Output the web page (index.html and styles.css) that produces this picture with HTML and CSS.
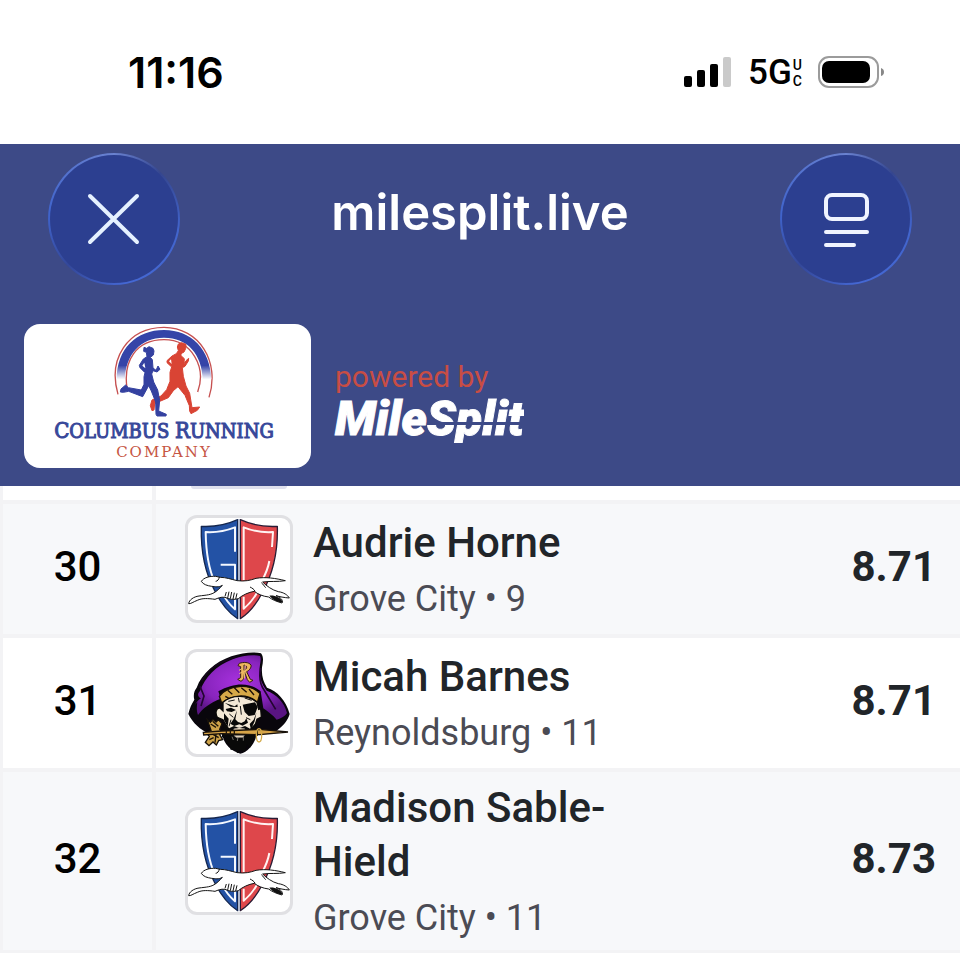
FILE: index.html
```html
<!DOCTYPE html>
<html lang="en">
<head>
<meta charset="utf-8">
<meta name="viewport" content="width=device-width, initial-scale=1">
<title>milesplit.live</title>
<link rel="stylesheet" href="styles.css">
</head>
<body>
<svg class="defs" aria-hidden="true">
  <defs>
    <symbol id="grove-city" viewBox="36 114 306 306">
      <g stroke-linejoin="round">
        <path d="M185 119C152 134 112 141 76 139C74 210 86 278 118 336C136 371 158 399 185 416Z" fill="#2352a5" stroke="#14264e" stroke-width="4"/>
        <path d="M193 119C226 134 268 141 304 139C306 210 292 278 260 336C242 371 220 399 193 416Z" fill="#de474b" stroke="#2a1c35" stroke-width="4"/>
        <path d="M189 117V418" stroke="#aeb6cc" stroke-width="5"/>
        <path d="M177 215V142C148 153 118 158 89 156C90 218 96 262 116 306M134 254H177V303M136 334C147 356 162 375 177 388V352" fill="none" stroke="#f4f8ff" stroke-width="6"/>
        <path d="M288 201L291 156C260 158 230 153 203 142V300M280 243C276 267 268 284 257 304M203 350V386C218 374 232 358 243 338" fill="none" stroke="#fff3f2" stroke-width="6"/>
        <path d="M76 304C83 293 100 288 119 289L133 292C150 292 165 298 184 302C205 305 224 301 240 295C268 290 300 295 328 302C306 306 280 303 260 306C272 318 288 330 307 335C323 337 335 345 340 354C325 353 310 350 300 347C314 352 322 360 318 369C303 365 288 359 278 351C260 349 245 342 235 334C217 337 200 345 187 356C175 360 158 358 147 352C134 350 125 355 117 358C96 355 78 354 64 361C51 366 44 372 38 371C39 360 53 350 69 348C90 345 107 346 123 332C132 324 136 320 139 316C128 323 117 320 107 319C94 317 82 314 76 304Z" fill="#fff" stroke="#151515" stroke-width="3"/>
        <path d="M119 304C124 304 129 298 130 291M222 321C228 324 235 328 237 334M256 308C264 315 262 316 269 323M151 336L147 349M159 335L155 354M167 336L163 356M175 338L171 357M183 340L179 357" fill="none" stroke="#151515" stroke-width="3"/>
        <path d="M280 347C295 345 313 351 321 367C307 368 292 361 280 347Z" fill="#111"/>
      </g>
    </symbol>
    <symbol id="reynoldsburg" viewBox="24 36 306 306">
      <radialGradient id="hat" cx=".5" cy=".42" r=".55">
        <stop offset="0" stop-color="#a832df"/>
        <stop offset=".65" stop-color="#8824bd"/>
        <stop offset="1" stop-color="#591482"/>
      </radialGradient>
      <path d="M25 222C29 205 35 191 43 179C39 165 43 151 50 143C65 102 105 66 154 49C187 38 222 34 243 40C252 51 249 66 246 82C244 108 250 125 261 143C291 153 318 180 329 222C324 241 310 258 289 273L230 279C229 306 205 336 181 341C155 335 130 313 126 280L88 281C61 270 38 249 25 222Z" fill="#09060c"/>
      <path d="M34 218C37 205 44 194 52 187C50 201 49 211 54 225C67 205 91 188 122 176L115 154C165 125 213 128 242 154L250 205C264 215 278 225 290 239C304 236 315 228 321 219C313 187 289 162 260 152C244 132 237 110 239 82C241 66 244 56 240 48C219 43 186 47 158 58C107 77 75 113 60 153C51 162 53 171 63 175C51 182 40 199 34 218Z" fill="url(#hat)"/>
      <path d="M60 139L72 168L63 198M242 84C235 118 242 137 254 153L287 208" stroke="#230531" stroke-width="5" fill="none"/>
      <path d="M65 124C83 88 123 62 172 50" stroke="#16071d" stroke-width="4" fill="none"/>
      <path d="M118 169C143 134 211 128 240 161L232 187C202 160 159 163 125 189Z" fill="#d6a948" stroke="#191006" stroke-width="4"/>
      <path d="M143 151L157 163M163 143L178 158M184 143L200 157M207 147L222 165M136 169L148 176" stroke="#1c1006" stroke-width="4"/>
      <path d="M129 187C157 162 204 165 231 187L236 208L242 206L244 231L231 238L221 268C207 287 154 286 142 263L129 239L112 232C104 218 109 203 120 204L129 213Z" fill="#f3e8d6" stroke="#0a0908" stroke-width="4"/>
      <path d="M134 188L164 199L172 193L173 201L152 200ZM188 194L225 187L233 201L224 225L206 228L194 216ZM137 207L153 203L168 210L155 216L141 214ZM171 211L166 238L174 246L184 249L194 244L199 235L204 248L188 257L178 253L163 258L151 251L161 237ZM132 220L146 236L143 260L132 240ZM229 219L224 244L213 269L209 252L221 239Z" fill="#080808"/>
      <path d="M181 198L184 224M148 222L160 232M198 233L211 239M153 239L147 259M175 173L178 187M194 174L215 181M145 184L164 180" fill="none" stroke="#111" stroke-width="3"/>
      <path d="M133 246L147 265L162 258L178 264L195 258L210 266L228 248L225 285L210 324L201 313L194 336L181 330L172 340L164 327L152 330L149 313L138 310L137 295L125 292Z" fill="#090909"/>
      <path d="M161 267L178 263L195 267L192 276L165 276ZM156 290L160 300M174 291L172 303M190 289L190 302M163 287H193L188 292H168Z" fill="#f2dfc3" stroke="#aaa39b" stroke-width="2"/>
      <path d="M82 239L91 247L99 238L108 246L115 239L126 251L119 268L126 275L119 284L128 299L116 302L109 315L99 306L87 317L76 307L88 289L78 278L93 271Z" fill="#cda249" stroke="#15100a" stroke-width="4"/>
      <path d="M92 252L108 262M98 244L115 259M95 281L116 293M88 299L101 293M108 282L105 308" stroke="#1b1308" stroke-width="4"/>
      <path d="M70 277L125 273L239 268L324 276L239 284L125 281L71 285Z" fill="#d7a448" stroke="#171009" stroke-width="4"/>
      <path d="M139 272V283M151 271V284M163 271V284M232 267V287" stroke="#231708" stroke-width="4"/>
      <ellipse cx="237" cy="286" rx="8" ry="20" fill="none" stroke="#d3aa4a" stroke-width="4"/>
      <path d="M178 70C191 66 206 66 213 75C215 83 207 92 200 95L211 118L219 121L209 127L202 119L194 97L191 117L183 124L173 118L182 113V80L174 77ZM192 75V91C201 87 204 77 192 75Z" fill="#eeb55c" stroke="#35200d" stroke-width="3" fill-rule="evenodd"/>
      <path d="M177 91L187 85M178 101L188 95M196 71L193 116" stroke="#f2c36f" stroke-width="3"/>
    </symbol>
  </defs>
</svg>

<div class="status">
  <time class="clock">11:16</time>
  <div class="indicators">
    <svg class="signal" viewBox="0 0 48 30" role="img" aria-label="Signal strength">
      <rect x="0" y="19" width="8" height="11" rx="2"/>
      <rect x="13" y="13" width="8" height="17" rx="2"/>
      <rect x="26" y="7" width="8" height="23" rx="2"/>
      <rect x="39" y="0" width="8" height="30" rx="2" fill="#cacaca"/>
    </svg>
    <div class="network"><span>5G</span><span class="band"><span>U</span><span>C</span></span></div>
    <svg class="battery" viewBox="0 0 66 32" role="img" aria-label="Battery">
      <rect x="1" y="1" width="59" height="30" rx="10" fill="#fff" stroke="#9b9b9b" stroke-width="2"/>
      <rect x="4" y="5" width="48" height="22" rx="7"/>
      <path d="M63 12Q66 13 66 16T63 20Z" fill="#888"/>
    </svg>
  </div>
</div>

<header class="header">
  <nav class="nav">
    <button class="round" type="button" aria-label="Close">
      <svg viewBox="0 0 132 132"><path d="M42 43L89 89M89 43L42 89" stroke="#e5f1ff" stroke-width="4" stroke-linecap="round"/></svg>
    </button>
    <h1 class="site">milesplit.live</h1>
    <button class="round" type="button" aria-label="Page menu">
      <svg viewBox="0 0 132 132" fill="none" stroke="#f0f4ff" stroke-width="4" stroke-linecap="round"><rect x="46" y="42" width="41" height="24" rx="6"/><path d="M46 79H87M46 92H74"/></svg>
    </button>
  </nav>
  <div class="brands">
    <a class="sponsor" href="#">
      <svg class="emblem" viewBox="276 18 318 282" aria-hidden="true">
        <defs><linearGradient id="arch" x1="0" y1="0" x2="0" y2="1"><stop offset=".72" stop-color="#3544a8"/><stop offset="1" stop-color="#fff"/></linearGradient></defs>
        <path d="M297 229C266 122 326 29 435 28C541 29 604 131 570 238M324 210C312 128 352 65 435 65C519 65 563 148 536 222" fill="none" stroke="#c65050" stroke-width="4"/>
        <path d="M293 184C293 92 352 36 435 36S574 95 577 184H551C549 109 506 59 435 59S319 111 318 184Z" fill="url(#arch)"/>
        <g fill="#d94434" stroke="#d94434" stroke-width="3" stroke-linejoin="round">
          <path d="M478 78L488 74L501 79L500 92L495 102L486 107V113L496 122L495 137L501 128L509 121L508 129L498 145L490 149L493 175L501 204L512 226L519 269L542 267L535 277L516 287L512 279L511 263L498 232L477 206L463 218L448 239L425 249L407 257L405 276L399 278L394 263L399 246L426 234L443 215L453 190V163L458 147L444 134V128L459 114L472 107L478 98L475 87Z"/>
        </g>
        <path d="M456 124L450 130L458 138Z" fill="#fff"/>
        <g fill="#3441a0" stroke="#3441a0" stroke-width="3" stroke-linejoin="round">
          <path d="M375 88L383 91L390 86L402 91L405 99L403 111L394 118L400 125L402 150L411 157L417 144L423 154L414 162L402 158L398 168L404 192L416 216L422 247L419 279L442 289L441 294L414 294L411 289L410 252L397 219L389 203L371 236L329 220L313 223L304 222L306 213L320 201L328 209L367 216L375 199V176L378 164L363 149L361 142L373 123L384 116L382 103L374 100Z"/>
        </g>
        <path d="M376 134L370 143L379 151Z" fill="#fff"/>
      </svg>
      <span class="sponsor-name"><b>C</b>OLUMBUS <b>R</b>UNNING</span>
      <span class="sponsor-kind">COMPANY</span>
    </a>
    <div class="powered">
      <span class="powered-label">powered by</span>
      <a class="milesplit" href="#">Mile<span class="cut">Split</span></a>
    </div>
  </div>
</header>

<main>
  <table class="results">
    <colgroup><col class="col-place"><col><col class="col-mark"></colgroup>
    <tbody>
      <tr class="scrolled"><td></td><td><div class="tile-edge"></div></td><td></td></tr>
      <tr class="shade">
        <td class="place">30</td>
        <td><div class="athlete"><svg class="tile" role="img" aria-label="Grove City"><use href="#grove-city"/></svg><div class="who"><div class="name">Audrie Horne</div><div class="team">Grove City • 9</div></div></div></td>
        <td class="mark">8.71</td>
      </tr>
      <tr>
        <td class="place">31</td>
        <td><div class="athlete"><svg class="tile" role="img" aria-label="Reynoldsburg"><use href="#reynoldsburg"/></svg><div class="who"><div class="name">Micah Barnes</div><div class="team">Reynoldsburg • 11</div></div></div></td>
        <td class="mark">8.71</td>
      </tr>
      <tr class="shade">
        <td class="place">32</td>
        <td><div class="athlete"><svg class="tile" role="img" aria-label="Grove City"><use href="#grove-city"/></svg><div class="who"><div class="name">Madison Sable-Hield</div><div class="team">Grove City • 11</div></div></div></td>
        <td class="mark">8.73</td>
      </tr>
    </tbody>
  </table>
</main>
</body>
</html>
```
FILE: styles.css
```css
* { box-sizing: border-box; }
body {
  margin: 0;
  background: #fff;
  color: #000;
  font-family: Roboto, sans-serif;
}
a { color: inherit; text-decoration: none; }
.defs { position: absolute; width: 0; height: 0; }

.status {
  display: flex;
  align-items: center;
  justify-content: space-between;
  height: 144px;
  padding: 0 76px 0 128px;
  font-family: Inter, sans-serif;
}
.clock { font-size: 43px; font-weight: 600; line-height: 48px; }
.indicators { display: flex; align-items: center; gap: 16px; }
.signal { width: 48px; height: 30px; }
.battery { width: 66px; height: 32px; }
.network {
  display: flex;
  align-items: center;
  gap: 1px;
  padding-top: 2px;
  font-family: Roboto, sans-serif;
  font-size: 35px;
  font-weight: 500;
  line-height: 36px;
}
.band { display: flex; flex-direction: column; font-size: 14px; line-height: 16px; }

.header { padding: 9px 0 18px; background: #3d4a87; color: #fff; }
.nav {
  display: flex;
  align-items: center;
  justify-content: space-between;
  padding: 0 48px;
}
.round {
  width: 132px;
  height: 132px;
  padding: 0;
  border: 2px solid transparent;
  border-radius: 50%;
  background:
    linear-gradient(#2c3f90, #2c3f90) padding-box,
    conic-gradient(#6a82d0, #35468f 45deg, #4265cd 100deg, #4568d4 170deg, #34489a 225deg, #4064cc 275deg, #6a82d0) border-box;
}
.round svg { display: block; width: 132px; height: 132px; margin: -2px; }
.site {
  margin: 0;
  padding-bottom: 12px;
  font-family: Inter, sans-serif;
  font-size: 49px;
  font-weight: 600;
  line-height: 60px;
}

.brands { display: flex; align-items: center; gap: 24px; padding: 39px 24px 0; }
.sponsor {
  display: flex;
  flex-direction: column;
  align-items: center;
  width: 287px;
  height: 144px;
  padding-right: 7px;
  border-radius: 16px;
  background: #fff;
}
.emblem { flex: none; width: 106px; height: 94px; }
.sponsor-name {
  color: #38489a;
  font-family: "DejaVu Serif Condensed", "DejaVu Serif", serif;
  font-size: 20px;
  line-height: 26px;
  white-space: nowrap;
  -webkit-text-stroke: 1px #38489a;
}
.sponsor-name b { font-size: 22px; font-weight: 400; }
.sponsor-kind {
  color: #c65543;
  font-family: "DejaVu Serif", serif;
  font-size: 15px;
  letter-spacing: 2px;
  line-height: 16px;
}
.powered { display: flex; flex-direction: column; padding-top: 10px; }
.powered-label { color: #c84d44; font-size: 30px; line-height: 36px; }
.milesplit {
  font-size: 48px;
  font-style: italic;
  font-weight: 900;
  line-height: 48px;
  -webkit-text-stroke: 1px #fff;
}
.cut {
  display: inline-block;
  background: linear-gradient(#fff 27px, transparent 27px, transparent 30px, #fff 30px);
  background-clip: text;
  -webkit-background-clip: text;
  color: transparent;
  -webkit-text-stroke: 1px transparent;
}

.results { width: 100%; border-collapse: separate; border-spacing: 0; table-layout: fixed; }
.col-place { width: 156px; }
.col-mark { width: 280px; }
.results td { height: 134px; padding: 0; border-bottom: 4px solid #f3f3f5; }
.results td:first-child { border-left: 3px solid #f3f3f5; border-right: 4px solid #f3f3f5; }
.results .scrolled td { height: 18px; vertical-align: top; }
.tile-edge {
  width: 96px;
  height: 3px;
  margin-left: 35px;
  border-radius: 0 0 12px 12px;
  background: #e0e1ed;
}
.shade { background: #f7f8fa; }
.results .place { padding-bottom: 6px; text-align: center; font-size: 42px; font-weight: 500; }
.athlete { display: flex; align-items: center; gap: 20px; padding-left: 29px; }
.tile {
  flex: none;
  width: 108px;
  height: 108px;
  border: 3px solid #e0e0e3;
  border-radius: 12px;
  background: #fff;
}
.who { padding: 9px 0 5px; }
.name { color: #212529; font-size: 42px; font-weight: 500; line-height: 54px; }
.team { padding-top: 2px; color: #4b4b54; font-size: 36px; line-height: 54px; }
.results .mark { padding: 0 24px 6px 0; text-align: right; color: #212529; font-size: 42px; font-weight: 700; }
```
